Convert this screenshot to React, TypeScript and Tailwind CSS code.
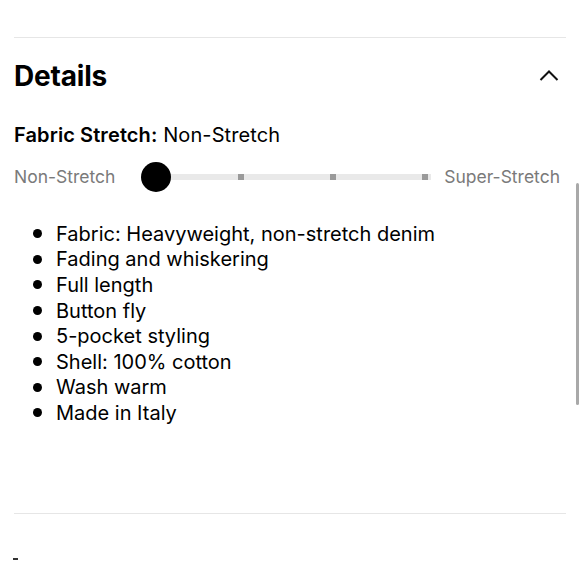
import React from "react";

const items = [
  "Fabric: Heavyweight, non-stretch denim",
  "Fading and whiskering",
  "Full length",
  "Button fly",
  "5-pocket styling",
  "Shell: 100% cotton",
  "Wash warm",
  "Made in Italy",
];

export default function App() {
  return (
    <div
      className="relative w-[580px] h-[580px] overflow-hidden bg-white text-black"
      style={{ fontFamily: "Inter, 'Liberation Sans', sans-serif" }}
    >
      <div className="px-[14px] pt-[37px]">
        <div className="border-t border-[#e6e6e6]" />
        <div className="flex items-center justify-between h-[76px]">
          <h2 className="text-[28px] font-bold tracking-[-0.2px]">Details</h2>
          <svg width="20" height="14" viewBox="0 0 20 14" className="mr-[7px] mt-[-2px]">
            <path d="M1.5 12 L10 3.5 L18.5 12" fill="none" stroke="#111" strokeWidth="2" />
          </svg>
        </div>
        <div className="text-[20px] leading-[24px] mt-[9px] tracking-[0.1px]">
          <span className="font-semibold">Fabric Stretch:</span> Non-Stretch
        </div>
        <div className="flex items-center h-[40px] mt-[10px]">
          <span className="text-[17.5px] text-[#7a7a7a] w-[127px]">Non-Stretch</span>
          <div className="relative w-[290px] h-[30px] flex items-center">
            <div className="absolute left-[15px] right-[0px] h-[6px] bg-[#e9e9e9]" />
            <div className="absolute left-[97px] w-[6px] h-[6px] bg-[#9a9a9a]" />
            <div className="absolute left-[189px] w-[6px] h-[6px] bg-[#9a9a9a]" />
            <div className="absolute left-[281px] w-[6px] h-[6px] bg-[#9a9a9a]" />
            <div className="absolute left-0 w-[30px] h-[30px] rounded-full bg-black" />
          </div>
          <span className="ml-auto mr-[6px] text-[17.5px] text-[#7a7a7a]">Super-Stretch</span>
        </div>
        <ul className="mt-[24px] pl-[19px]">
          {items.map((t) => (
            <li key={t} className="flex items-center h-[25.6px] text-[20px]">
              <span className="w-[9px] h-[9px] rounded-full bg-black mr-[14px]" />
              <span>{t}</span>
            </li>
          ))}
        </ul>
        <div className="mt-[87px] border-t border-[#e6e6e6]" />
        <div className="mt-[44px] w-[5px] h-[2px] bg-[#333] ml-[-1px]" />
      </div>
      <div className="absolute left-[576px] top-[183px] w-[3px] h-[222px] rounded-full bg-[#a9a9a9]" />
    </div>
  );
}
